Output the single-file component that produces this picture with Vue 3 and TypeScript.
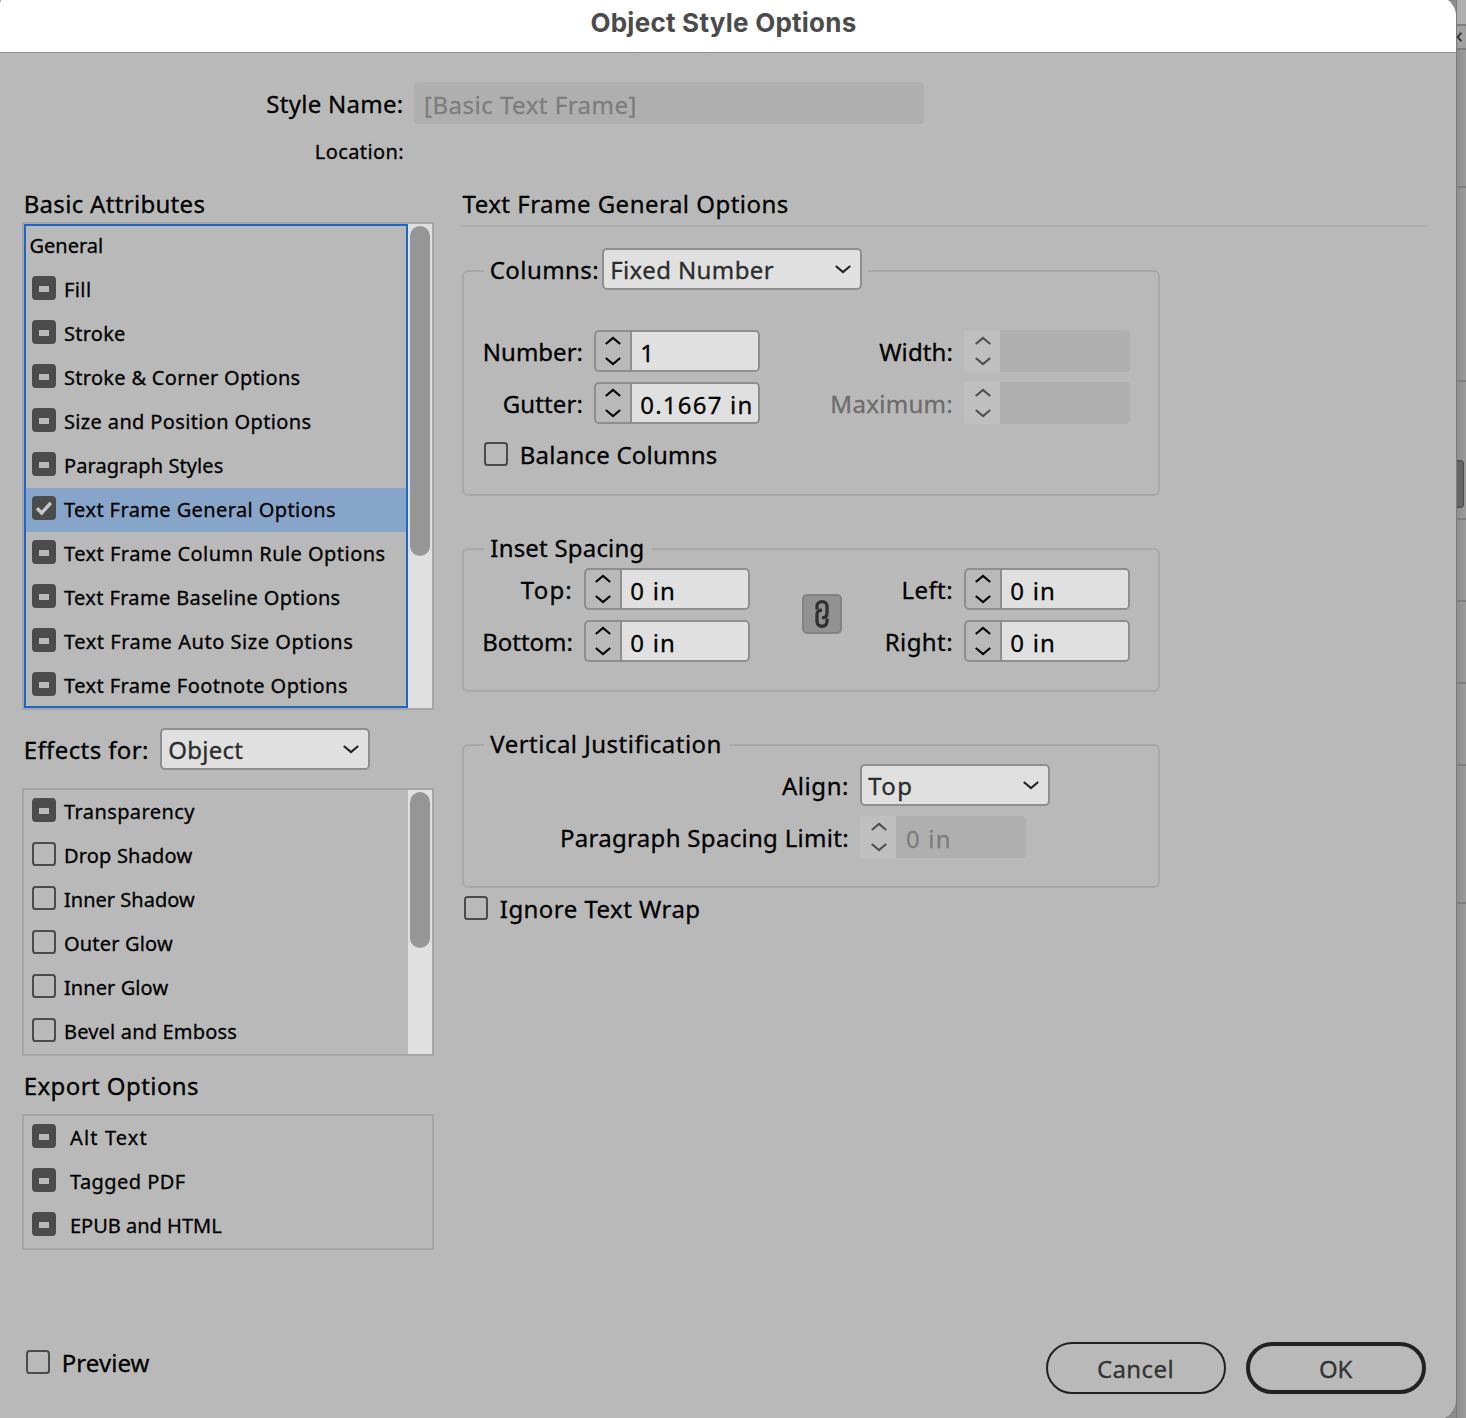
<script setup lang="ts">
import { ref, h, type FunctionalComponent } from 'vue'

type CheckState = 'none' | 'off' | 'mixed' | 'on'

interface Item {
  label: string
  state: CheckState
  track?: number
}

// Letter spacing (px) of labels that differ from the default of 0.4px
const tracking: Record<string, number> = {
  'Style Name:': 0.28,
  '[Basic Text Frame]': 0.5,
  'Basic Attributes': 0.31,
  'Balance Columns': 0.22,
  'Paragraph Spacing Limit:': 0.3,
  'Vertical Justification': 0.48,
  'Inset Spacing': 0.2,
  'Columns:': 0.45,
  'Number:': 0,
  'Gutter:': 0.1,
  'Width:': 0.1,
  'Maximum:': 0.3,
  'Top:': 1.2,
  'Top': 1.4,
  'Bottom:': 0,
  'Align:': 0.55,
  'Cancel': 0.4,
  'OK': -0.2,
  'Preview': 0.05,
  'Object': 0.25,
  'Ignore Text Wrap': 0.45,
}

const T: FunctionalComponent<{ t: string; k?: number }> = (p) =>
  h('span', { style: { letterSpacing: `${p.k ?? tracking[p.t] ?? 0.4}px` } }, p.t)
T.props = ['t', 'k']

const Chevron: FunctionalComponent<{ up?: boolean }> = (p) =>
  h('svg', { width: 16, height: 9, viewBox: '0 0 16 9', fill: 'none', stroke: 'currentColor', 'stroke-width': 2.1 }, [
    h('path', { d: p.up ? 'M.8 8 8 1.9 15.2 8' : 'M.8 1 8 7.1 15.2 1' }),
  ])
Chevron.props = { up: Boolean }

const Check: FunctionalComponent<{ state: CheckState }> = (p) =>
  h('svg', { width: 24, height: 24, viewBox: '0 0 24 24', fill: 'none' },
    p.state === 'off'
      ? [h('rect', { x: 1, y: 1, width: 22, height: 22, rx: 2.6, stroke: '#4b4b4b', 'stroke-width': 2 })]
      : [
          h('rect', { width: 24, height: 24, rx: 4, fill: '#4b4b4b' }),
          p.state === 'mixed'
            ? h('rect', { x: 7, y: 10, width: 10, height: 6, fill: '#b9b9b9' })
            : h('path', { d: 'M5 12.2l4.7 4.8L18.8 6.8', stroke: '#c4c8ce', 'stroke-width': 3.4 }),
        ])
Check.props = ['state']

const Spin: FunctionalComponent<{ value?: string; disabled?: boolean }> = (p) =>
  h('div', { class: ['spin', { disabled: p.disabled }] }, [
    h('div', { class: 'steps' }, [h(Chevron, { up: true }), h(Chevron)]),
    h('div', { class: 'value' }, p.value ? [h(T, { t: p.value, k: 1.2 })] : []),
  ])
Spin.props = { value: String, disabled: Boolean }

const Select: FunctionalComponent<{ value: string }> = (p) =>
  h('div', { class: 'select' }, [h(T, { t: p.value }), h(Chevron)])
Select.props = ['value']

const selected = ref('Text Frame General Options')

const attributes: Item[] = [
  { label: 'General', state: 'none', track: 0 },
  { label: 'Fill', state: 'mixed', track: 0.4 },
  { label: 'Stroke', state: 'mixed', track: 0.25 },
  { label: 'Stroke & Corner Options', state: 'mixed', track: 0.3 },
  { label: 'Size and Position Options', state: 'mixed', track: 0.36 },
  { label: 'Paragraph Styles', state: 'mixed', track: 0.08 },
  { label: 'Text Frame General Options', state: 'on' },
  { label: 'Text Frame Column Rule Options', state: 'mixed', track: 0.47 },
  { label: 'Text Frame Baseline Options', state: 'mixed', track: 0.36 },
  { label: 'Text Frame Auto Size Options', state: 'mixed', track: 0.54 },
  { label: 'Text Frame Footnote Options', state: 'mixed', track: 0.42 },
]

const effects: Item[] = [
  { label: 'Transparency', state: 'mixed', track: 0.4 },
  { label: 'Drop Shadow', state: 'off', track: 0.18 },
  { label: 'Inner Shadow', state: 'off', track: 0.02 },
  { label: 'Outer Glow', state: 'off', track: 0.18 },
  { label: 'Inner Glow', state: 'off', track: 0.08 },
  { label: 'Bevel and Emboss', state: 'off', track: 0.18 },
]

const exportsList: Item[] = [
  { label: 'Alt Text', state: 'mixed', track: 1.15 },
  { label: 'Tagged PDF', state: 'mixed', track: 0.44 },
  { label: 'EPUB and HTML', state: 'mixed', track: 0 },
]
</script>

<template>
  <div class="screen">
    <main class="dialog">
      <header class="titlebar"><T t="Object Style Options" :k="0.25" /></header>

      <div class="name-row">
        <label class="name-label"><T t="Style Name:" /></label>
        <div class="name-input"><T t="[Basic Text Frame]" /></div>
      </div>
      <div class="location"><T t="Location:" /></div>

      <div class="columns">
        <section class="left">
          <h2><T t="Basic Attributes" /></h2>
          <div class="list">
            <ul class="focused">
              <li v-for="i in attributes" :key="i.label" :class="{ selected: i.label === selected, plain: i.state === 'none' }">
                <Check v-if="i.state !== 'none'" :state="i.state" />
                <T :t="i.label" :k="i.track" />
              </li>
            </ul>
            <div class="track"><div class="thumb long"></div></div>
          </div>

          <div class="effects-row">
            <label><T t="Effects for:" :k="0.4" /></label>
            <Select class="w210" value="Object" />
          </div>
          <div class="list effects">
            <ul>
              <li v-for="i in effects" :key="i.label">
                <Check :state="i.state" />
                <T :t="i.label" :k="i.track" />
              </li>
            </ul>
            <div class="track"><div class="thumb short"></div></div>
          </div>

          <h2 class="export-title"><T t="Export Options" :k="0.43" /></h2>
          <div class="list">
            <ul class="wide">
              <li v-for="i in exportsList" :key="i.label">
                <Check :state="i.state" />
                <T :t="i.label" :k="i.track" />
              </li>
            </ul>
          </div>
        </section>

        <section class="right">
          <h2 class="ruled"><T t="Text Frame General Options" :k="0.48" /></h2>

          <div class="group columns-group">
            <div class="legend with-select">
              <label><T t="Columns:" /></label>
              <Select class="w260" value="Fixed Number" />
            </div>
            <div class="fields">
              <div class="stack">
                <div class="field"><label class="l130"><T t="Number:" /></label><Spin value="1" /></div>
                <div class="field"><label class="l130"><T t="Gutter:" /></label><Spin value="0.1667 in" /></div>
              </div>
              <div class="stack">
                <div class="field"><label class="l204"><T t="Width:" /></label><Spin disabled /></div>
                <div class="field"><label class="l204 dim"><T t="Maximum:" /></label><Spin disabled /></div>
              </div>
            </div>
            <div class="check-row balance"><Check state="off" /><T t="Balance Columns" /></div>
          </div>

          <div class="group inset-group">
            <div class="legend"><T t="Inset Spacing" /></div>
            <div class="fields tight">
              <div class="stack">
                <div class="field"><label class="l120"><T t="Top:" /></label><Spin value="0 in" /></div>
                <div class="field"><label class="l120"><T t="Bottom:" /></label><Spin value="0 in" /></div>
              </div>
              <div class="link">
                <svg width="14" height="28" viewBox="0 0 14 28" fill="none" stroke="#303030" stroke-width="3.3">
                  <path d="M2 9.4V6.4C2 3.6 4 1.7 7 1.7s5 1.9 5 4.7v7.2c0 2.6-1.8 4.2-5 4.2" />
                  <path d="M12 18.6v3c0 2.8-2 4.7-5 4.7s-5-1.9-5-4.7v-7.2c0-2.6 1.8-4.2 5-4.2" />
                </svg>
              </div>
              <div class="stack">
                <div class="field"><label class="l122"><T t="Left:" /></label><Spin value="0 in" /></div>
                <div class="field"><label class="l122"><T t="Right:" /></label><Spin value="0 in" /></div>
              </div>
            </div>
          </div>

          <div class="group inset-group">
            <div class="legend"><T t="Vertical Justification" /></div>
            <div class="fields tight">
              <div class="stack">
                <div class="field"><label class="l396"><T t="Align:" /></label><Select class="w190" value="Top" /></div>
                <div class="field"><label class="l396"><T t="Paragraph Spacing Limit:" /></label><Spin value="0 in" disabled /></div>
              </div>
            </div>
          </div>

          <div class="check-row ignore"><Check state="off" /><T t="Ignore Text Wrap" /></div>
        </section>
      </div>

      <footer>
        <div class="check-row preview"><Check state="off" /><T t="Preview" /></div>
        <div class="buttons">
          <button type="button"><T t="Cancel" /></button>
          <button type="button" class="default"><T t="OK" /></button>
        </div>
      </footer>
    </main>

    <aside class="backdrop">
      <div class="b1"></div>
      <div class="b2">
        <svg width="5" height="10" viewBox="0 0 5 10" fill="none" stroke="#2e2e2e" stroke-width="1.8"><path d="M4.4.8.6 5l3.8 4.2" /></svg>
      </div>
      <div class="b3"></div>
      <div class="b4"></div>
      <div class="b5"><div class="grip"></div></div>
      <div class="b6"></div>
      <div class="b6"></div>
      <div class="b6"></div>
      <div class="b7"></div>
    </aside>
  </div>
</template>

<style>
body { margin: 0; overflow: hidden; }
</style>

<style scoped>
.screen, .screen :deep(*) { box-sizing: border-box; }
.screen {
  display: flex;
  width: 1466px;
  height: 1418px;
  overflow: hidden;
  background: linear-gradient(90deg, #8c8c8c 1454px, #8f8f8f 1457px, #9b9b9b 1466px);
  font-family: "Noto Sans", "Open Sans", sans-serif;
  font-size: 24px;
  color: #000;
  white-space: nowrap;
  -webkit-text-stroke: 0.3px currentColor;
}
.screen :deep(svg) { display: block; flex: none; }
.dialog {
  flex: none;
  width: 1456px;
  height: 1424px;
  margin-top: -4px;
  background: #b9b9b9;
  border-radius: 8px 20px 20px 0;
  overflow: hidden;
  box-shadow: 0 0 1px #666;
}
.titlebar {
  height: 57px;
  padding: 4px 9px 0 0;
  background: #fff;
  border-bottom: 1px solid #919191;
  text-align: center;
  font: 700 26px/46px Inter, sans-serif;
  color: #4b4b4b;
  -webkit-text-stroke: 0;
}
.name-row { display: flex; margin-top: 29px; height: 42px; line-height: 43px; }
.name-label { width: 414px; padding-right: 10.5px; text-align: right; }
.name-input {
  width: 510px;
  padding-left: 10px;
  background: #afafaf;
  border-radius: 4px;
  color: #7d7d7d;
  line-height: 45px;
}
.location { margin-top: 14px; width: 404px; height: 28px; font-size: 20px; line-height: 28px; text-align: right; }
.columns { display: flex; gap: 28px; margin: 22px 0 0 22px; }
.left { width: 412px; }
.right { width: 964px; }
h2 { margin: 0; padding-left: 1.7px; height: 32px; font-size: 24px; font-weight: 400; line-height: 32px; }
.list { display: flex; margin-top: 2px; border: 2px solid #a6a6a6; }
.list.effects { margin-top: 0; }
ul { list-style: none; margin: 0; padding: 0; width: 384px; font-size: 20px; }
ul.focused { outline: 2px solid #1b66c9; outline-offset: -2px; }
li { display: flex; gap: 8px; height: 44px; padding: 8px 0 0 8px; }
li > :deep(span) { margin-top: -8px; line-height: 44px; }
li.plain { padding-left: 5.5px; }
li.selected { background: #87a5c9; }
ul.wide { width: 408px; }
ul.wide li { gap: 14px; }
.track { width: 24px; padding: 2px; background: #e0e0e0; }
.thumb { width: 20px; border-radius: 10px; background: #969696; }
.thumb.long { height: 330px; }
.thumb.short { height: 156px; }
.effects-row { display: flex; justify-content: space-between; width: 348px; height: 42px; margin: 18px 0; padding-left: 1.7px; line-height: 43px; }
.export-title { margin-top: 14px; }
.export-title + .list { margin-top: 12px; }

.screen :deep(.select) {
  display: flex;
  justify-content: space-between;
  height: 42px;
  padding: 0 9px 0 6.2px;
  border: 2px solid #8e8e8e;
  border-radius: 5px;
  background: #e0e0e0;
  color: #2c2c2c;
  line-height: 39px;
}
.screen :deep(.select svg) { margin-top: 15px; color: #222; }
.w210 { width: 210px; }
.w260 { width: 260px; }
.w190 { width: 190px; }

.screen :deep(.spin) {
  display: flex;
  width: 166px;
  height: 42px;
  border: 2px solid #8e8e8e;
  border-radius: 5px;
  overflow: hidden;
}
.screen :deep(.steps) {
  display: flex;
  flex-direction: column;
  gap: 12px;
  width: 36px;
  padding: 4px 0 0 9px;
  border-right: 2px solid #8e8e8e;
}
.screen :deep(.value) { flex: 1; padding-left: 8.3px; background: #e0e0e0; line-height: 41px; }
.screen :deep(.spin.disabled) { border: 0; border-radius: 4px; }
.screen :deep(.disabled .steps) { padding: 6px 0 0 11px; border: 0; background: #bfbfbf; color: #4f4f4f; }
.screen :deep(.disabled .value) { padding-left: 10px; background: #afafaf; color: #7d7d7d; line-height: 45px; }

.ruled { padding: 0 0 0 .5px; height: 39px; border-bottom: 2px solid #acacac; }
.group { width: 698px; border: 2px solid #a8a8a8; border-radius: 6px; }
.columns-group { height: 226px; margin-top: 43px; }
.inset-group { height: 144px; margin-top: 52px; }
.legend {
  width: fit-content;
  height: 32px;
  margin: -18px 0 0 20px;
  padding: 0 7px 0 6.3px;
  background: #b9b9b9;
  line-height: 32px;
}
.legend.with-select { display: flex; height: 42px; margin-top: -24px; padding: 0 6px 0 5.7px; line-height: 43px; }
.with-select label { width: 112.3px; }
.fields { display: flex; margin-top: 40px; }
.fields.tight { margin-top: 4px; }
.stack { display: flex; flex-direction: column; gap: 10px; }
.field { display: flex; height: 42px; line-height: 43px; }
.field label { padding-right: 11px; text-align: right; }
.l130 { width: 130px; }
.l204 { width: 204px; }
.l120 { width: 120px; }
.l122 { width: 122px; }
.l396 { width: 396px; }
.dim { color: #6c6c6c; }
.link {
  width: 40px;
  height: 40px;
  margin: 26px 0 0 52px;
  padding: 4px 0 0 11px;
  border: 2px solid #828282;
  border-radius: 5px;
  background: #929292;
}
.check-row { display: flex; gap: 11.8px; height: 24px; line-height: 25px; }
.balance { margin: 18px 0 0 20px; }
.ignore { margin: 8px 0 0 2px; }

footer { display: flex; justify-content: space-between; margin: 92px 30px 0 26px; }
.preview { margin-top: 8px; }
.buttons { display: flex; gap: 20px; }
button {
  width: 180px;
  height: 52px;
  padding: 2px 1px 0 0;
  border: 2px solid #222;
  border-radius: 26px;
  background: none;
  font: 24px/46px "Noto Sans", sans-serif;
  color: #333;
}
button.default { border-width: 4px; line-height: 42px; }

.backdrop { flex: 1; height: 1418px; border-left: 1px solid #7c7c7c; }
.backdrop > div { border-bottom: 2px solid #7f7f7f; }
.b1 { height: 26px; background: #afafaf; }
.b2 { height: 24px; padding-top: 6px; background: #a0a0a0; }
.b3 { height: 138px; }
.b4 { height: 194px; }
.b5 { height: 138px; padding-top: 78px; }
.b6 { height: 82px; }
.b7 { height: 138px; }
.grip { width: 7px; height: 48px; border: 1px solid #4d4d4d; border-left: 0; border-radius: 0 4px 4px 0; background: #676767; }
</style>
